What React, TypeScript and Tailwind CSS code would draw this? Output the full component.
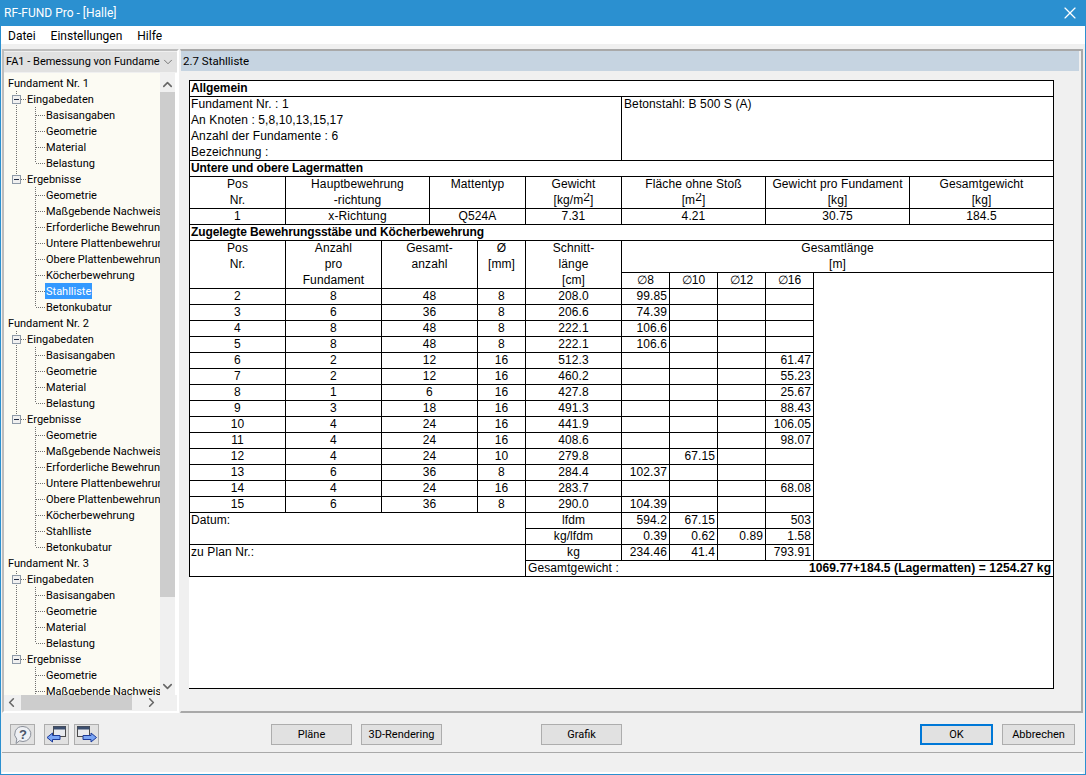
import React from "react";
import { ChevronDown, ChevronUp, ChevronLeft, ChevronRight, X } from "lucide-react";

const UI = "font-['Roboto',sans-serif]";

type Node = { t: string; l: number; last?: boolean; sel?: boolean; box?: boolean; tr?: boolean };
const group = (n: number, sel: boolean): Node[] => [
  { t: `Fundament Nr. ${n}`, l: 0 },
  { t: "Eingabedaten", l: 1, box: true },
  { t: "Basisangaben", l: 2, tr: true },
  { t: "Geometrie", l: 2, tr: true },
  { t: "Material", l: 2, tr: true },
  { t: "Belastung", l: 2, last: true, tr: true },
  { t: "Ergebnisse", l: 1, box: true, last: true },
  { t: "Geometrie", l: 2 },
  { t: "Maßgebende Nachweise", l: 2 },
  { t: "Erforderliche Bewehrung", l: 2 },
  { t: "Untere Plattenbewehrung", l: 2 },
  { t: "Obere Plattenbewehrung", l: 2 },
  { t: "Köcherbewehrung", l: 2 },
  { t: "Stahlliste", l: 2, sel },
  { t: "Betonkubatur", l: 2, last: true },
];
const tree = [...group(1, true), ...group(2, false), ...group(3, false)];

function Guide({ n }: { n: Node }) {
  if (n.l === 0) return <span className="w-[3px] shrink-0" />;
  const dot = "#707070";
  if (n.l === 1) {
    return (
      <svg width="22" height="16" className="shrink-0">
        <path d={n.last ? "M12.5 0V8" : "M12.5 0V16"} stroke={dot} strokeDasharray="1 1" />
        <path d="M17 8.5H22" stroke={dot} strokeDasharray="1 1" />
        <rect x="8.5" y="4.5" width="8" height="8" fill="#f0f0f0" stroke="#8e9aa8" />
        <path d="M10 8.5H15" stroke="#1f2a44" />
      </svg>
    );
  }
  return (
    <svg width="41" height="16" className="shrink-0">
      {n.tr && <path d="M12.5 0V16" stroke={dot} strokeDasharray="1 1" />}
      <path d={n.last ? "M31.5 0V8" : "M31.5 0V16"} stroke={dot} strokeDasharray="1 1" />
      <path d="M32 8.5H41" stroke={dot} strokeDasharray="1 1" />
    </svg>
  );
}

const C = "border border-black px-[2px] h-[16px] leading-[15px] align-top overflow-hidden whitespace-nowrap";
const L = "border border-black pl-[1px] pr-[2px] h-[16px] leading-[15px] align-top overflow-hidden whitespace-nowrap";
const B = `${L} font-bold tracking-[-0.1px]`;
const TC = `${C} text-center`;
const R = `${C} text-right`;

const rows: [number, number, number, number, string, string, string, string, string][] = [
  [2, 8, 48, 8, "208.0", "99.85", "", "", ""],
  [3, 6, 36, 8, "206.6", "74.39", "", "", ""],
  [4, 8, 48, 8, "222.1", "106.6", "", "", ""],
  [5, 8, 48, 8, "222.1", "106.6", "", "", ""],
  [6, 2, 12, 16, "512.3", "", "", "", "61.47"],
  [7, 2, 12, 16, "460.2", "", "", "", "55.23"],
  [8, 1, 6, 16, "427.8", "", "", "", "25.67"],
  [9, 3, 18, 16, "491.3", "", "", "", "88.43"],
  [10, 4, 24, 16, "441.9", "", "", "", "106.05"],
  [11, 4, 24, 16, "408.6", "", "", "", "98.07"],
  [12, 4, 24, 10, "279.8", "", "67.15", "", ""],
  [13, 6, 36, 8, "284.4", "102.37", "", "", ""],
  [14, 4, 24, 16, "283.7", "", "", "", "68.08"],
  [15, 6, 36, 8, "290.0", "104.39", "", "", ""],
];

const widths = [96, 96, 48, 48, 48, 96, 48, 48, 48, 48, 96, 144];

function Report() {
  return (
    <div className="w-[865px] h-[609px] border border-black bg-white border-t-0 border-l-0">
      <table className="border-collapse table-fixed w-[865px] text-[12px] tracking-[0.1px] text-black font-['Liberation_Sans',sans-serif] -mt-px">
        <colgroup>
          {widths.map((w, i) => (
            <col key={i} style={{ width: w }} />
          ))}
        </colgroup>
        <tbody>
          <tr><td colSpan={12} className={B}>Allgemein</td></tr>
          <tr>
            <td colSpan={6} className={`${L} border-b-0`}>Fundament Nr. : 1</td>
            <td rowSpan={4} colSpan={6} className={C}>Betonstahl: B 500 S (A)</td>
          </tr>
          <tr><td colSpan={6} className={`${L} border-y-0`}>An Knoten : 5,8,10,13,15,17</td></tr>
          <tr><td colSpan={6} className={`${L} border-y-0`}>Anzahl der Fundamente : 6</td></tr>
          <tr><td colSpan={6} className={`${L} border-t-0`}>Bezeichnung :</td></tr>
          <tr><td colSpan={12} className={B}>Untere und obere Lagermatten</td></tr>
          <tr>
            <td className={`${TC} border-b-0`}>Pos</td>
            <td colSpan={2} className={`${TC} border-b-0`}>Hauptbewehrung</td>
            <td colSpan={2} className={`${TC} border-b-0`}>Mattentyp</td>
            <td className={`${TC} border-b-0`}>Gewicht</td>
            <td colSpan={3} className={`${TC} border-b-0`}>Fläche ohne Stoß</td>
            <td colSpan={2} className={`${TC} border-b-0`}>Gewicht pro Fundament</td>
            <td className={`${TC} border-b-0`}>Gesamtgewicht</td>
          </tr>
          <tr>
            <td className={`${TC} border-t-0`}>Nr.</td>
            <td colSpan={2} className={`${TC} border-t-0`}>-richtung</td>
            <td colSpan={2} className={`${TC} border-t-0`}></td>
            <td className={`${TC} border-t-0`}>[kg/m<sup className="text-[12px] align-baseline relative -top-[3px]">2</sup>]</td>
            <td colSpan={3} className={`${TC} border-t-0`}>[m<sup className="text-[12px] align-baseline relative -top-[3px]">2</sup>]</td>
            <td colSpan={2} className={`${TC} border-t-0`}>[kg]</td>
            <td className={`${TC} border-t-0`}>[kg]</td>
          </tr>
          <tr>
            <td className={TC}>1</td>
            <td colSpan={2} className={TC}>x-Richtung</td>
            <td colSpan={2} className={TC}>Q524A</td>
            <td className={TC}>7.31</td>
            <td colSpan={3} className={TC}>4.21</td>
            <td colSpan={2} className={TC}>30.75</td>
            <td className={TC}>184.5</td>
          </tr>
          <tr><td colSpan={12} className={B}>Zugelegte Bewehrungsstäbe und Köcherbewehrung</td></tr>
          <tr>
            <td className={`${TC} border-b-0`}>Pos</td>
            <td className={`${TC} border-b-0`}>Anzahl</td>
            <td colSpan={2} className={`${TC} border-b-0`}>Gesamt-</td>
            <td className={`${TC} border-b-0`}>Ø</td>
            <td className={`${TC} border-b-0`}>Schnitt-</td>
            <td colSpan={6} rowSpan={1} className={`${TC} border-b-0`}>Gesamtlänge</td>
          </tr>
          <tr>
            <td className={`${TC} border-y-0`}>Nr.</td>
            <td className={`${TC} border-y-0`}>pro</td>
            <td colSpan={2} className={`${TC} border-y-0`}>anzahl</td>
            <td className={`${TC} border-y-0`}>[mm]</td>
            <td className={`${TC} border-y-0`}>länge</td>
            <td colSpan={6} className={`${TC} border-t-0`}>[m]</td>
          </tr>
          <tr>
            <td className={`${TC} border-t-0`}></td>
            <td className={`${TC} border-t-0`}>Fundament</td>
            <td colSpan={2} className={`${TC} border-t-0`}></td>
            <td className={`${TC} border-t-0`}></td>
            <td className={`${TC} border-t-0`}>[cm]</td>
            <td className={TC}>∅8</td>
            <td className={TC}>∅10</td>
            <td className={TC}>∅12</td>
            <td className={TC}>∅16</td>
            <td colSpan={2} rowSpan={18} className="border border-black"></td>
          </tr>
          {rows.map((r) => (
            <tr key={r[0]}>
              <td className={TC}>{r[0]}</td>
              <td className={TC}>{r[1]}</td>
              <td colSpan={2} className={TC}>{r[2]}</td>
              <td className={TC}>{r[3]}</td>
              <td className={TC}>{r[4]}</td>
              <td className={R}>{r[5]}</td>
              <td className={R}>{r[6]}</td>
              <td className={R}>{r[7]}</td>
              <td className={R}>{r[8]}</td>
            </tr>
          ))}
          <tr>
            <td colSpan={5} rowSpan={2} className={L}>Datum:</td>
            <td className={TC}>lfdm</td>
            <td className={R}>594.2</td>
            <td className={R}>67.15</td>
            <td className={R}></td>
            <td className={R}>503</td>
          </tr>
          <tr>
            <td className={TC}>kg/lfdm</td>
            <td className={R}>0.39</td>
            <td className={R}>0.62</td>
            <td className={R}>0.89</td>
            <td className={R}>1.58</td>
          </tr>
          <tr>
            <td colSpan={5} rowSpan={2} className={L}>zu Plan Nr.:</td>
            <td className={TC}>kg</td>
            <td className={R}>234.46</td>
            <td className={R}>41.4</td>
            <td className={R}></td>
            <td className={R}>793.91</td>
          </tr>
          <tr>
            <td colSpan={7} className={C}>
              <div className="flex justify-between">
                <span>Gesamtgewicht :</span>
                <span className="font-bold">1069.77+184.5 (Lagermatten) = 1254.27 kg</span>
              </div>
            </td>
          </tr>
        </tbody>
      </table>
    </div>
  );
}

function Btn({ children, className = "", primary = false, icon = false }: { children: React.ReactNode; className?: string; primary?: boolean; icon?: boolean }) {
  const edge = primary ? "border-2 border-[#0078d7]" : "border border-[#adadad]";
  return (
    <button className={`h-[21px] bg-[#e1e1e1] ${edge} ${icon ? "" : "pt-[2px]"} text-[11px] text-black flex items-center justify-center ${className}`}>
      {children}
    </button>
  );
}

function WinIcon({ dir }: { dir: "l" | "r" }) {
  const x = dir === "l" ? 7.5 : 1.5;
  return (
    <svg width="22" height="20" viewBox="0 0 22 20">
      <rect x={x} y="1.5" width="12" height="10" fill="#e8eaee" stroke="#4a4a4a" />
      <rect x={x} y="1.5" width="12" height="3" fill="#3c4f70" />
      {dir === "l" ? (
        <path d="M1 12.5L6.5 8V10.5H14V14.5H6.5V17z" fill="#7aa5f5" stroke="#1c3a98" strokeLinejoin="round" />
      ) : (
        <path d="M20.5 12.5L15 8V10.5H7V14.5H15V17z" fill="#7aa5f5" stroke="#1c3a98" strokeLinejoin="round" />
      )}
    </svg>
  );
}

export default function App() {
  return (
    <div className={`w-[1086px] h-[775px] bg-[#f0f0f0] flex flex-col overflow-hidden border-x border-b border-[#2b90d0] ${UI}`}>
      <div className="h-[26px] bg-[#2b90d0] -mx-px flex items-center justify-between pl-[4px] pr-[6px] text-white text-[12px] shrink-0">
        <span>RF-FUND Pro - [Halle]</span>
        <X size={20} strokeWidth={1.4} className="text-white" />
      </div>
      <div className="h-[18px] bg-white flex items-center pl-[7px] pt-[1px] gap-[15px] text-[12px] text-black shrink-0">
        <span>Datei</span>
        <span>Einstellungen</span>
        <span>Hilfe</span>
      </div>
      <div className="flex h-[669px] pl-[1px] pt-[5px] shrink-0 gap-[1px]">
        <div className="w-[177px] h-[664px] border-2 border-t-[#bdbdbd] border-l-[#bdbdbd] border-b-white border-r-white bg-[#f0f0f0] flex flex-col pt-[1px] shrink-0">
          <div className="h-[20px] bg-[#e1e1e1] flex items-center pl-[2px] pr-[2px] justify-between text-[11px] text-black shrink-0">
            <span className="whitespace-nowrap pt-[1px]">FA1 - Bemessung von Fundame</span>
            <ChevronDown size={14} strokeWidth={1.3} className="text-[#555] shrink-0" />
          </div>
          <div className="flex h-[622px] mt-[1px] bg-white shrink-0">
            <div className="w-[156px] h-[622px] pt-[2px] overflow-hidden text-[11px] text-black bg-[#fcfbf3] shrink-0">
              {tree.map((n, i) => (
                <div key={i} className="h-[16px] flex items-center whitespace-nowrap">
                  <Guide n={n} />
                  <span className={n.sel ? "bg-[#3399ff] text-white h-[16px] leading-[18px] px-[1px]" : "h-[16px] leading-[18px] px-[1px]"}>{n.t}</span>
                </div>
              ))}
            </div>
            <div className="w-[15px] bg-[#f0f0f0] h-[622px] flex flex-col shrink-0 pt-[4px]">
              <ChevronUp size={15} strokeWidth={2.5} className="text-[#666] shrink-0" />
              <div className="h-[505px] bg-[#cdcdcd] shrink-0" />
              <div className="flex-1" />
              <ChevronDown size={15} strokeWidth={2.5} className="text-[#666] shrink-0 mb-[1px]" />
            </div>
          </div>
          <div className="h-[15px] bg-[#f0f0f0] flex items-center shrink-0">
            <ChevronLeft size={15} strokeWidth={2.5} className="text-[#666] shrink-0" />
            <div className="w-[111px] h-[15px] bg-[#cdcdcd] ml-[2px] shrink-0" />
            <ChevronRight size={15} strokeWidth={2.5} className="text-[#666] shrink-0 ml-[12px]" />
          </div>
        </div>
        <div className="w-[903px] h-[664px] border-t-2 border-r-2 border-b-2 border-[#a9a9a9] border-l border-l-[#f0f0f0] flex flex-col shrink-0">
          <div className="h-[20px] w-[898px] bg-[#c6d4e1] flex items-center pl-[2px] pt-[1px] text-[11.5px] text-black shrink-0">2.7 Stahlliste</div>
          <div className="pl-[8px] pt-[10px]">
            <Report />
          </div>
        </div>
      </div>
      <div className="h-[39px] flex items-start pt-[11px] pl-[9px] pr-[10px] shrink-0">
        <Btn icon className="w-[25px] mr-[9px]">
          <svg width="20" height="20" viewBox="0 0 20 20">
            <path d="M10 1.5a8 7.5 0 1 1-3.5 14.3L3 18.5l.8-4.4A8 7.5 0 0 1 10 1.5z" fill="#eef0f4" stroke="#8a8f99" />
            <text x="10" y="14" textAnchor="middle" fontSize="13" fontWeight="bold" fill="#4a5568" fontFamily="Liberation Sans">?</text>
          </svg>
        </Btn>
        <Btn icon className="w-[25px] mr-[5px]"><WinIcon dir="l" /></Btn>
        <Btn icon className="w-[25px] mr-[172px]"><WinIcon dir="r" /></Btn>
        <Btn className="w-[81px] mr-[9px]">Pläne</Btn>
        <Btn className="w-[81px] mr-[99px]">3D-Rendering</Btn>
        <Btn className="w-[81px]">Grafik</Btn>
        <div className="flex-1" />
        <Btn primary className="w-[73px] mr-[9px]">OK</Btn>
        <Btn className="w-[73px]">Abbrechen</Btn>
      </div>
      <div className="flex-1 border-t border-b-2 border-t-[#a9a9a9] border-b-white ml-[1px] mr-[2px]" />
    </div>
  );
}
